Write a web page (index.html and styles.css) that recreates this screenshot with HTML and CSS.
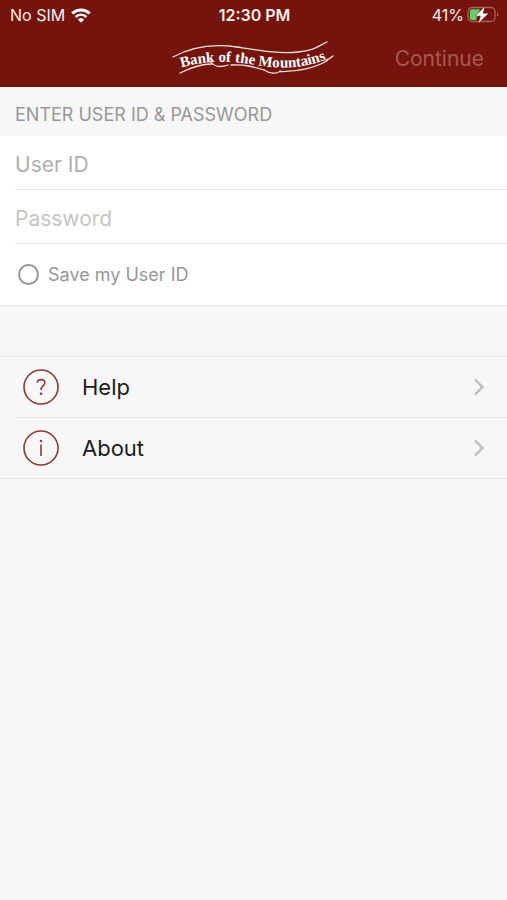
FILE: index.html
```html
<!DOCTYPE html>
<html lang="en">
<head>
<meta charset="utf-8">
<meta name="viewport" content="width=device-width, initial-scale=1">
<title>Bank of the Mountains</title>
<link rel="stylesheet" href="styles.css">
</head>
<body>
<header class="top">
  <div class="status">
    <div class="status-left">
      <span>No SIM</span>
      <svg class="wifi" viewBox="0 0 20 15" aria-hidden="true">
        <path d="M1.2 5.4C6.2.7 13.8.7 18.8 5.4" fill="none" stroke="currentColor" stroke-width="3"/>
        <path d="M4.6 8.9C7.8 6 12.2 6 15.4 8.9" fill="none" stroke="currentColor" stroke-width="2.7"/>
        <path d="M6.9 11.5C8.7 9.9 11.3 9.9 13.1 11.5L10 14.7Z" fill="currentColor"/>
      </svg>
    </div>
    <time class="clock">12:30 PM</time>
    <div class="status-right">
      <span>41%</span>
      <svg class="battery" viewBox="0 0 32 18" aria-hidden="true">
        <rect x="1" y="1.5" width="27" height="14" rx="4" fill="none" stroke="#a8625a" stroke-width="1.3"/>
        <path d="M30 6.2C31.7 6.8 31.7 10.2 30 10.8Z" fill="#a8625a"/>
        <path d="M5 3.3H13L9 14H5Q2.8 14 2.8 11.8V5.5Q2.8 3.3 5 3.3Z" fill="#62cf68"/>
        <path d="M17.8.6L8.8 9.8H13.8L11.6 17L21.2 7.6H15.8Z" fill="#fff" stroke="#75140c" stroke-width="1" paint-order="stroke"/>
      </svg>
    </div>
  </div>
  <div class="nav">
    <svg class="logo" viewBox="0 0 164 38" role="img" aria-label="Bank of the Mountains">
      <path id="wave" d="M9 27.500C30 22 46 20.500 66 22.500S88 27 108 27.500S140 25 164 16" fill="none"/>
      <g fill="none" stroke="#f6e3df" stroke-width="1.300" stroke-linecap="round">
        <path d="M1 17C19 7 39 3 65 7S108 14 126 12S146 6 155 2"/>
        <path d="M8 33C20 27 30 24 40 24"/>
        <path d="M38 21C42 27 49 27.500 56 25"/>
        <path d="M59 25C72 24 82 27 92 30"/>
        <path d="M92 30C98 34 106 34 108 31"/>
        <path d="M108 31.500C126 32 146 27 156 20"/>
        <path d="M154 20C157 19 159 18 161 16"/>
      </g>
      <text class="logo-text"><textPath href="#wave">Bank of the Mountains</textPath></text>
    </svg>
    <button class="continue" type="button" disabled>Continue</button>
  </div>
</header>
<main>
  <form>
    <h1 class="section-title">ENTER USER ID &amp; PASSWORD</h1>
    <div class="fields">
      <div class="field"><input class="text-input user" type="text" placeholder="User ID" aria-label="User ID"></div>
      <div class="field"><input class="text-input" type="password" placeholder="Password" aria-label="Password"></div>
      <label class="save"><input class="save-box" type="checkbox"><span>Save my User ID</span></label>
    </div>
  </form>
  <nav class="links">
    <a class="link" href="#help">
      <svg class="badge" viewBox="0 0 36 36" aria-hidden="true">
        <circle cx="18" cy="18" r="17"/>
        <path d="M14.200 13.800C14.600 9.500 21.800 9.500 21.800 13.800C21.800 16.800 18 17 18 21"/>
        <circle class="dot" cx="18" cy="24.800" r="1.300"/>
      </svg>
      <span class="link-text">Help</span>
      <svg class="chevron" viewBox="0 0 12 18" aria-hidden="true"><path d="M2 1.500L9.500 9L2 16.500"/></svg>
    </a>
    <a class="link" href="#about">
      <svg class="badge" viewBox="0 0 36 36" aria-hidden="true">
        <circle cx="18" cy="18" r="17"/>
        <path d="M18 14.500V26"/>
        <circle class="dot" cx="18" cy="11" r="1.300"/>
      </svg>
      <span class="link-text">About</span>
      <svg class="chevron" viewBox="0 0 12 18" aria-hidden="true"><path d="M2 1.500L9.500 9L2 16.500"/></svg>
    </a>
  </nav>
</main>
</body>
</html>
```
FILE: styles.css
```css
* { box-sizing: border-box; }

body {
  margin: 0;
  min-height: 100vh;
  background: #f7f7f7;
  font-family: Inter, "Liberation Sans", sans-serif;
  color: #1c1c1c;
}

.top {
  background: #75140c;
  color: #fbeeeb;
}

.status {
  display: grid;
  grid-template-columns: 1fr auto 1fr;
  align-items: center;
  height: 30px;
  padding: 0 8px 0 10px;
  font-size: 16px;
}

.status-left,
.status-right {
  display: flex;
  align-items: center;
  gap: 6px;
}

.status-right {
  justify-content: flex-end;
  gap: 3px;
}

.wifi {
  width: 20px;
  height: 15px;
  color: #fff;
}

.battery {
  width: 32px;
  height: 18px;
}

.clock { font-weight: 600; }

.nav {
  display: grid;
  grid-template-columns: 1fr auto 1fr;
  align-items: center;
  height: 57px;
  padding: 0 23px;
}

.logo {
  grid-column: 2;
  width: 164px;
  height: 38px;
}

.logo-text {
  font-family: "Liberation Serif", serif;
  font-size: 15px;
  font-weight: 700;
  fill: #fff;
}

.continue {
  justify-self: end;
  padding: 0;
  border: 0;
  background: none;
  font: 400 21px/28px Inter, "Liberation Sans", sans-serif;
  color: #a8584e;
}

.section-title {
  margin: 0;
  padding: 16px 15px 9px;
  font-size: 18px;
  line-height: 24px;
  font-weight: 400;
  color: #979797;
}

.fields {
  padding-left: 15px;
  background: #fff;
  border-bottom: 1px solid #e6e6e6;
}

.field {
  height: 54px;
  border-bottom: 1px solid #e6e6e6;
}

.text-input {
  display: block;
  width: 100%;
  height: 100%;
  padding: 3px 0 0;
  border: 0;
  outline: 0;
  background: none;
  font: 400 21px/28px Inter, "Liberation Sans", sans-serif;
  color: #1c1c1c;
}

.text-input::placeholder {
  color: #c5c5c5;
  opacity: 1;
}

.user::placeholder { color: #afafaf; }

.save {
  display: flex;
  align-items: center;
  gap: 9px;
  height: 61px;
  padding-left: 3px;
  font-size: 18px;
  color: #979797;
}

.save-box {
  appearance: none;
  width: 21px;
  height: 21px;
  margin: 0;
  border: 2px solid #979797;
  border-radius: 50%;
}

.save-box:checked { background: #979797; }

.links {
  margin-top: 50px;
  padding-left: 15px;
  border: 1px solid #e9e9e9;
  border-width: 1px 0;
}

.link {
  display: flex;
  align-items: center;
  height: 60px;
  padding: 0 22px 0 8px;
  color: inherit;
  text-decoration: none;
}

.link + .link {
  height: 61px;
  border-top: 1px solid #e9e9e9;
}

.badge {
  width: 36px;
  height: 36px;
  fill: none;
  stroke: #8c3a38;
  stroke-width: 1.6;
}

.badge .dot {
  fill: #8c3a38;
  stroke: none;
}

.link-text {
  flex: 1;
  margin-left: 23px;
  font-size: 22px;
}

.chevron {
  width: 12px;
  height: 18px;
  fill: none;
  stroke: #bdbdbd;
  stroke-width: 2.4;
}
```
